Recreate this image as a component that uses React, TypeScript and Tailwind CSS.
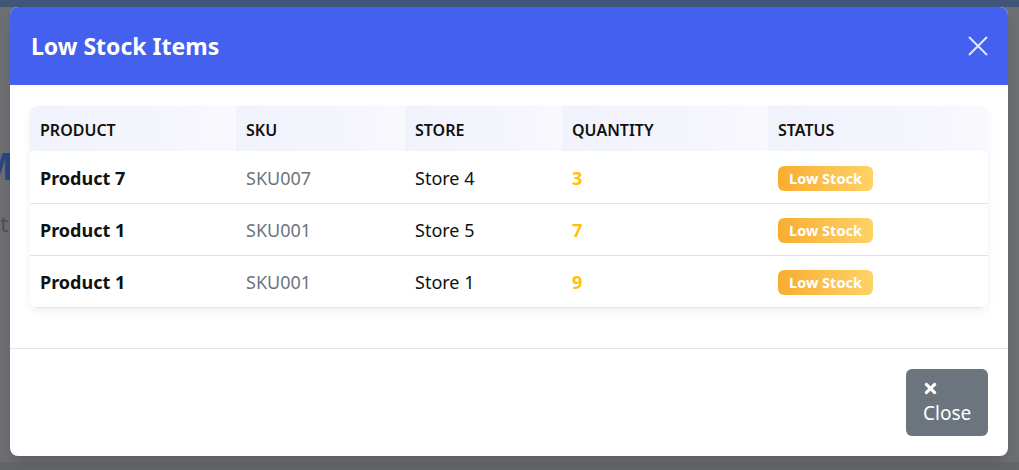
import { FaTimes } from 'react-icons/fa';

const items = [
  { product: 'Product 7', sku: 'SKU007', store: 'Store 4', qty: 3 },
  { product: 'Product 1', sku: 'SKU001', store: 'Store 5', qty: 7 },
  { product: 'Product 1', sku: 'SKU001', store: 'Store 1', qty: 9 },
];

const columns = ['Product', 'SKU', 'Store', 'Quantity', 'Status'];

export default function App() {
  return (
    <div
      className="relative h-[470px] w-[1019px] overflow-hidden bg-[#6d6e72]"
      style={{ fontFamily: '"Noto Sans", "Open Sans", sans-serif' }}
    >
      {/* page behind the backdrop */}
      <div className="absolute inset-0 flex flex-col">
        <div className="h-[7px] bg-[#3f5678]" />
        <div className="relative flex-1">
          <span className="absolute left-[-22px] top-[130px] text-[38px] font-bold text-[#2e4584]">M</span>
          <span className="absolute left-[-12px] top-[200px] text-[22px] text-[#4e4f53]">at</span>
        </div>
        <div className="h-[8px] bg-[#646569]" />
      </div>

      {/* modal */}
      <div className="absolute left-[10px] top-[7px] flex h-[449px] w-[998px] flex-col overflow-hidden rounded-lg bg-white shadow-lg">
        <div className="flex h-[78px] items-center justify-between bg-[#4361ee] pl-[21px] pr-[20px]">
          <h2 className="text-[23px] font-bold text-white">Low Stock Items</h2>
          <button className="flex h-[20px] w-[20px] items-center justify-center opacity-85">
            <svg width="20" height="20" viewBox="0 0 20 20">
              <path d="M1 1 L19 19 M19 1 L1 19" stroke="white" strokeWidth="2" />
            </svg>
          </button>
        </div>

        <div className="border-b border-[#e2e2ea] px-5 pt-[21px] pb-[40px]">
          <div className="overflow-hidden rounded-lg shadow-[0_4px_10px_rgba(0,0,0,0.06)]">
            <table className="w-full border-collapse text-left">
              <colgroup>
                <col className="w-[206px]" />
                <col className="w-[169px]" />
                <col className="w-[157px]" />
                <col className="w-[206px]" />
                <col />
              </colgroup>
              <thead>
                <tr>
                  {columns.map((c) => (
                    <th
                      key={c}
                      className="h-[45px] bg-gradient-to-r from-[#f0f2fc] to-[#f8f8fd] px-[10px] pt-[2px] text-[16px] font-semibold uppercase text-[#111]"
                    >
                      {c}
                    </th>
                  ))}
                </tr>
              </thead>
              <tbody>
                {items.map((item, i) => (
                  <tr key={i} className="border-b border-[#e2e2ea]">
                    <td className="h-[52px] px-[10px] pt-[3px] text-[18px] font-bold text-[#111]">{item.product}</td>
                    <td className="px-[10px] pt-[3px] text-[18px] text-[#6c757d]">{item.sku}</td>
                    <td className="px-[10px] pt-[3px] text-[18px] text-[#111]">{item.store}</td>
                    <td className="px-[10px] pt-[3px] text-[18px] font-bold text-[#ffc107]">{item.qty}</td>
                    <td className="px-[10px] pt-[3px]">
                      <span className="inline-flex h-[25px] w-[95px] items-center justify-center rounded-md bg-gradient-to-r from-[#f8ad2e] to-[#fed266] text-[14.5px] font-bold text-white">
                        Low Stock
                      </span>
                    </td>
                  </tr>
                ))}
              </tbody>
            </table>
          </div>
        </div>

        <div className="flex flex-1 items-start justify-end px-5 pt-[20px]">
          <button className="flex h-[67px] w-[82px] flex-col items-start justify-center rounded-md bg-[#6c757d] pl-[17px] text-white">
            <FaTimes className="-mt-[2px] h-[17px] w-[15px]" />
            <span className="mt-[7px] text-[19px] leading-none">Close</span>
          </button>
        </div>
      </div>
    </div>
  );
}
